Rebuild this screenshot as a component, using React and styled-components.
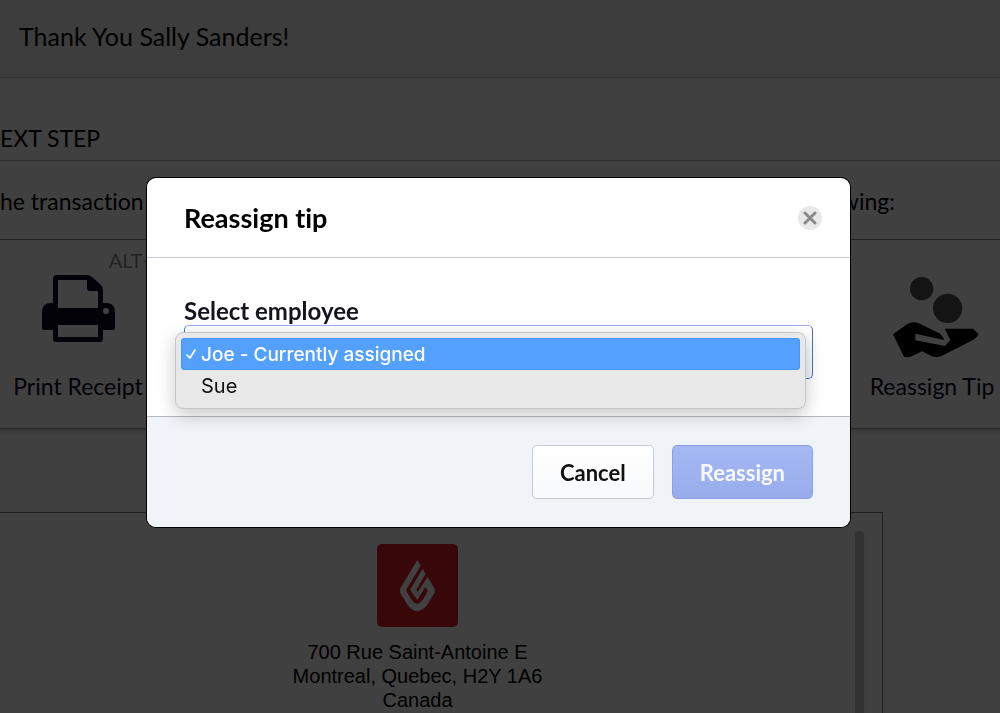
import React from "react";
import styled, { createGlobalStyle } from "styled-components";

const GlobalStyle = createGlobalStyle`
  *, *::before, *::after { box-sizing: border-box; }
  body {
    margin: 0;
    background: #fff;
    color: #000;
    font-family: Lato, "Liberation Sans", sans-serif;
    font-size: 23px;
    font-variant-ligatures: none;
  }
  h1, h2, p, ul { margin: 0; padding: 0; font-weight: 400; }
  button, select { font-family: inherit; }
`;

const Page = styled.div`
  display: flex;
  flex-direction: column;
  height: 100vh;
  overflow: hidden;
`;

const TopBar = styled.header`
  height: 78px;
  flex: none;
  padding: 20px 19px 0;
  background: #f3f3f6;
  border-bottom: 1px solid #c8ccd4;
`;

const Title = styled.h1`
  font-size: 25px;
  line-height: 32px;
`;

const SectionTitle = styled.h2`
  flex: none;
  height: 83px;
  padding-top: 44px;
  font-size: 23px;
  line-height: 32px;
  border-bottom: 1px solid #b0b4ba;
`;

const Intro = styled.p`
  flex: none;
  display: flex;
  justify-content: space-between;
  height: 78px;
  padding: 24px 105px 0 0;
  line-height: 32px;
`;

const Actions = styled.div`
  flex: none;
  display: flex;
  justify-content: space-between;
  height: 190px;
  border-top: 1px solid #888;
  border-bottom: 1px solid #999;
  box-shadow: 0 2px 4px rgba(0, 0, 0, 0.2);
`;

const Action = styled.button`
  display: flex;
  flex-direction: column;
  align-items: center;
  width: ${(p) => p.$width};
  padding: 8px 0 0;
  border: 0;
  background: none;
  color: #0b0b22;
  font-size: 23px;
  line-height: 32px;
  white-space: nowrap;
`;

const Shortcut = styled.span`
  align-self: flex-end;
  height: 26px;
  margin-right: -10px;
  color: #888;
  font-size: 20px;
  line-height: 24px;
`;

const IconSlot = styled.span`
  display: flex;
  justify-content: center;
  height: 96px;
`;

const Receipt = styled.section`
  flex: 1;
  min-height: 0;
  display: flex;
  margin: 83px 117px 0 0;
  padding: 16px 15px 0 0;
  border: solid #777;
  border-width: 1px 1px 0 0;
`;

const ReceiptBody = styled.div`
  flex: 1;
  display: flex;
  flex-direction: column;
  align-items: center;
  padding: 15px 16px 0 0;
  font-family: "Liberation Sans", sans-serif;
  font-size: 20px;
  line-height: 24px;
  text-align: center;
`;

const Address = styled.address`
  margin-top: 13px;
  font-style: normal;
`;

const Track = styled.div`
  width: 16px;
  padding: 2px 3px 0 4px;
  background: #fafafa;
`;

const Thumb = styled.div`
  height: 100%;
  border-radius: 5px 5px 0 0;
  background: #c1c1c1;
`;

const Backdrop = styled.div`
  position: fixed;
  inset: 0;
  display: flex;
  justify-content: center;
  align-items: flex-start;
  padding: 178px 3px 0 0;
  background: rgba(0, 0, 0, 0.75);
`;

const Dialog = styled.section`
  width: 100%;
  max-width: 703px;
  border-radius: 9px;
  background: #fff;
  box-shadow: 0 0 0 1px #000;
`;

const DialogHeader = styled.header`
  display: flex;
  align-items: center;
  justify-content: space-between;
  height: 80px;
  padding: 0 28px 0 37px;
  border-bottom: 1px solid #c9ced6;
`;

const DialogTitle = styled.h2`
  font-size: 27px;
  line-height: 32px;
  && { font-weight: 700; }
`;

const CloseButton = styled.button`
  display: flex;
  align-items: center;
  justify-content: center;
  width: 24px;
  height: 24px;
  padding: 0;
  border: 0;
  border-radius: 50%;
  background: #e8e8e8;
`;

const DialogBody = styled.div`
  padding: 38px 37px 37px;
`;

const Label = styled.label`
  display: block;
  color: #14141f;
  font-size: 24px;
  font-weight: 700;
  line-height: 29px;
`;

const SelectWrap = styled.div`
  position: relative;
  height: 54px;
`;

const Select = styled.select`
  appearance: none;
  display: block;
  width: 100%;
  height: 54px;
  padding: 0 16px;
  border: 1px solid #4f6be0;
  border-top-color: #a3aaf0;
  border-radius: 5px;
  background: linear-gradient(#fff, #f3f5f8);
  color: #14141f;
  font-size: 19px;
`;

const Menu = styled.ul`
  position: absolute;
  top: 7px;
  left: -9px;
  right: 7px;
  padding: 5px 5px 6px;
  border: 1px solid #c6c6c6;
  border-radius: 8px;
  background: #e8e8e8;
  box-shadow: 0 6px 18px rgba(0, 0, 0, 0.22);
  list-style: none;
  font-family: Inter, "Liberation Sans", sans-serif;
`;

const MenuItem = styled.li`
  display: flex;
  align-items: center;
  height: 32px;
  border-radius: 4px;
  background: ${(p) => (p.$active ? "#54a0ff" : "none")};
  box-shadow: ${(p) => (p.$active ? "inset 0 0 0 1px #3f97ff" : "none")};
  color: ${(p) => (p.$active ? "#fff" : "#111")};
  font-size: ${(p) => (p.$active ? "19px" : "20px")};
  font-weight: ${(p) => (p.$active ? 500 : 400)};
`;

const Mark = styled.span`
  display: flex;
  justify-content: center;
  width: 20px;
`;

const DialogFooter = styled.footer`
  display: flex;
  justify-content: flex-end;
  gap: 18px;
  padding: 28px 37px;
  border-top: 1px solid #b3bac4;
  border-radius: 0 0 9px 9px;
  background: #f0f4f8;
`;

const Button = styled.button`
  height: 54px;
  padding: 0 27px;
  border: 1px solid ${(p) => (p.$primary ? "#8c9fe8" : "#c5cad3")};
  border-radius: 5px;
  background: ${(p) =>
    p.$primary ? "linear-gradient(#a5b8f3, #98acec)" : "linear-gradient(#fff, #f8f9fb)"};
  color: ${(p) => (p.$primary ? "#f7f9ff" : "#111")};
  font-size: 22px;
  font-weight: 700;
`;

function PrinterIcon() {
  return (
    <svg width="74" height="69" viewBox="0 0 74 69" aria-hidden="true">
      <path
        fill="#0b0b22"
        fillRule="evenodd"
        d="M16 1H46Q49 1 51 3L60 11Q62 13 62 16V29H65Q74 29 74 38V54Q74 56 72 56H62V65Q62 68 59 68H15Q12 68 12 65V56H3Q1 56 1 54V38Q1 29 10 29H12V5Q12 1 16 1ZM17 6V34H57V17H49Q46 17 46 14V6ZM17 51V63H57V51ZM65 34A3 3 0 1 0 65 40A3 3 0 1 0 65 34Z"
      />
    </svg>
  );
}

function TipIcon() {
  return (
    <svg width="95" height="84" viewBox="314 309 285 252" aria-hidden="true">
      <circle cx="424" cy="353" r="35" fill="#505050" />
      <circle cx="502" cy="412" r="44" fill="#505050" />
      <path
        fill="#000"
        d="M338 490L380 460Q398 450 415 457L477 487Q485 492 492 507L405 488V508L494 525L510 507L493 473H578L595 490Q588 502 578 507L482 556Q468 561 455 556L425 541L390 557Q380 560 371 557Z"
      />
    </svg>
  );
}

function FlameLogo() {
  return (
    <svg width="81" height="83" viewBox="0 0 243 249" role="img" aria-label="Store logo">
      <rect width="243" height="249" rx="15" fill="#dc1c28" />
      <path
        fill="#fff"
        d="M121 48L131 65L89 135Q87 139 89 143L104 168Q120 190 137 168L150 146Q153 141 151 137L145 129L121 167L101 141Q99 138 101 134L137 74L146 90L118 137L122 144L152 99L172 133Q175 140 172 147L150 184Q121 219 92 184L70 147Q67 140 70 133Z"
      />
    </svg>
  );
}

export default function App() {
  return (
    <>
      <GlobalStyle />
      <Page>
        <TopBar>
          <Title>Thank You Sally Sanders!</Title>
        </TopBar>
        <SectionTitle>EXT STEP</SectionTitle>
        <Intro>
          <span>he transaction</span>
          <span>following:</span>
        </Intro>
        <Actions>
          <Action type="button" $width="156px">
            <Shortcut>ALT+P</Shortcut>
            <IconSlot>
              <PrinterIcon />
            </IconSlot>
            Print Receipt
          </Action>
          <Action type="button" $width="136px">
            <Shortcut />
            <IconSlot>
              <TipIcon />
            </IconSlot>
            Reassign Tip
          </Action>
        </Actions>
        <Receipt>
          <ReceiptBody>
            <FlameLogo />
            <Address>
              700 Rue Saint-Antoine E<br />
              Montreal, Quebec, H2Y 1A6
              <br />
              Canada
            </Address>
          </ReceiptBody>
          <Track>
            <Thumb />
          </Track>
        </Receipt>
      </Page>
      <Backdrop>
        <Dialog role="dialog" aria-modal="true" aria-labelledby="dialog-title">
          <DialogHeader>
            <DialogTitle id="dialog-title">Reassign tip</DialogTitle>
            <CloseButton type="button" aria-label="Close">
              <svg width="14" height="14" viewBox="0 0 14 14" aria-hidden="true">
                <path d="M2 2L12 12M12 2L2 12" stroke="#8a8a8a" strokeWidth="3" strokeLinecap="round" />
              </svg>
            </CloseButton>
          </DialogHeader>
          <DialogBody>
            <Label htmlFor="employee">Select employee</Label>
            <SelectWrap>
              <Select id="employee" defaultValue="joe">
                <option value="joe">Joe - Currently assigned</option>
                <option value="sue">Sue</option>
              </Select>
              <Menu role="listbox" aria-label="Select employee">
                <MenuItem role="option" aria-selected="true" $active>
                  <Mark>
                    <svg width="10" height="10" viewBox="0 0 10 10" aria-hidden="true">
                      <path d="M1 6L4 9L9 1" fill="none" stroke="#fff" strokeWidth="1.7" strokeLinecap="round" strokeLinejoin="round" />
                    </svg>
                  </Mark>
                  Joe - Currently assigned
                </MenuItem>
                <MenuItem role="option" aria-selected="false">
                  <Mark />
                  Sue
                </MenuItem>
              </Menu>
            </SelectWrap>
          </DialogBody>
          <DialogFooter>
            <Button type="button">Cancel</Button>
            <Button type="button" $primary>
              Reassign
            </Button>
          </DialogFooter>
        </Dialog>
      </Backdrop>
    </>
  );
}
